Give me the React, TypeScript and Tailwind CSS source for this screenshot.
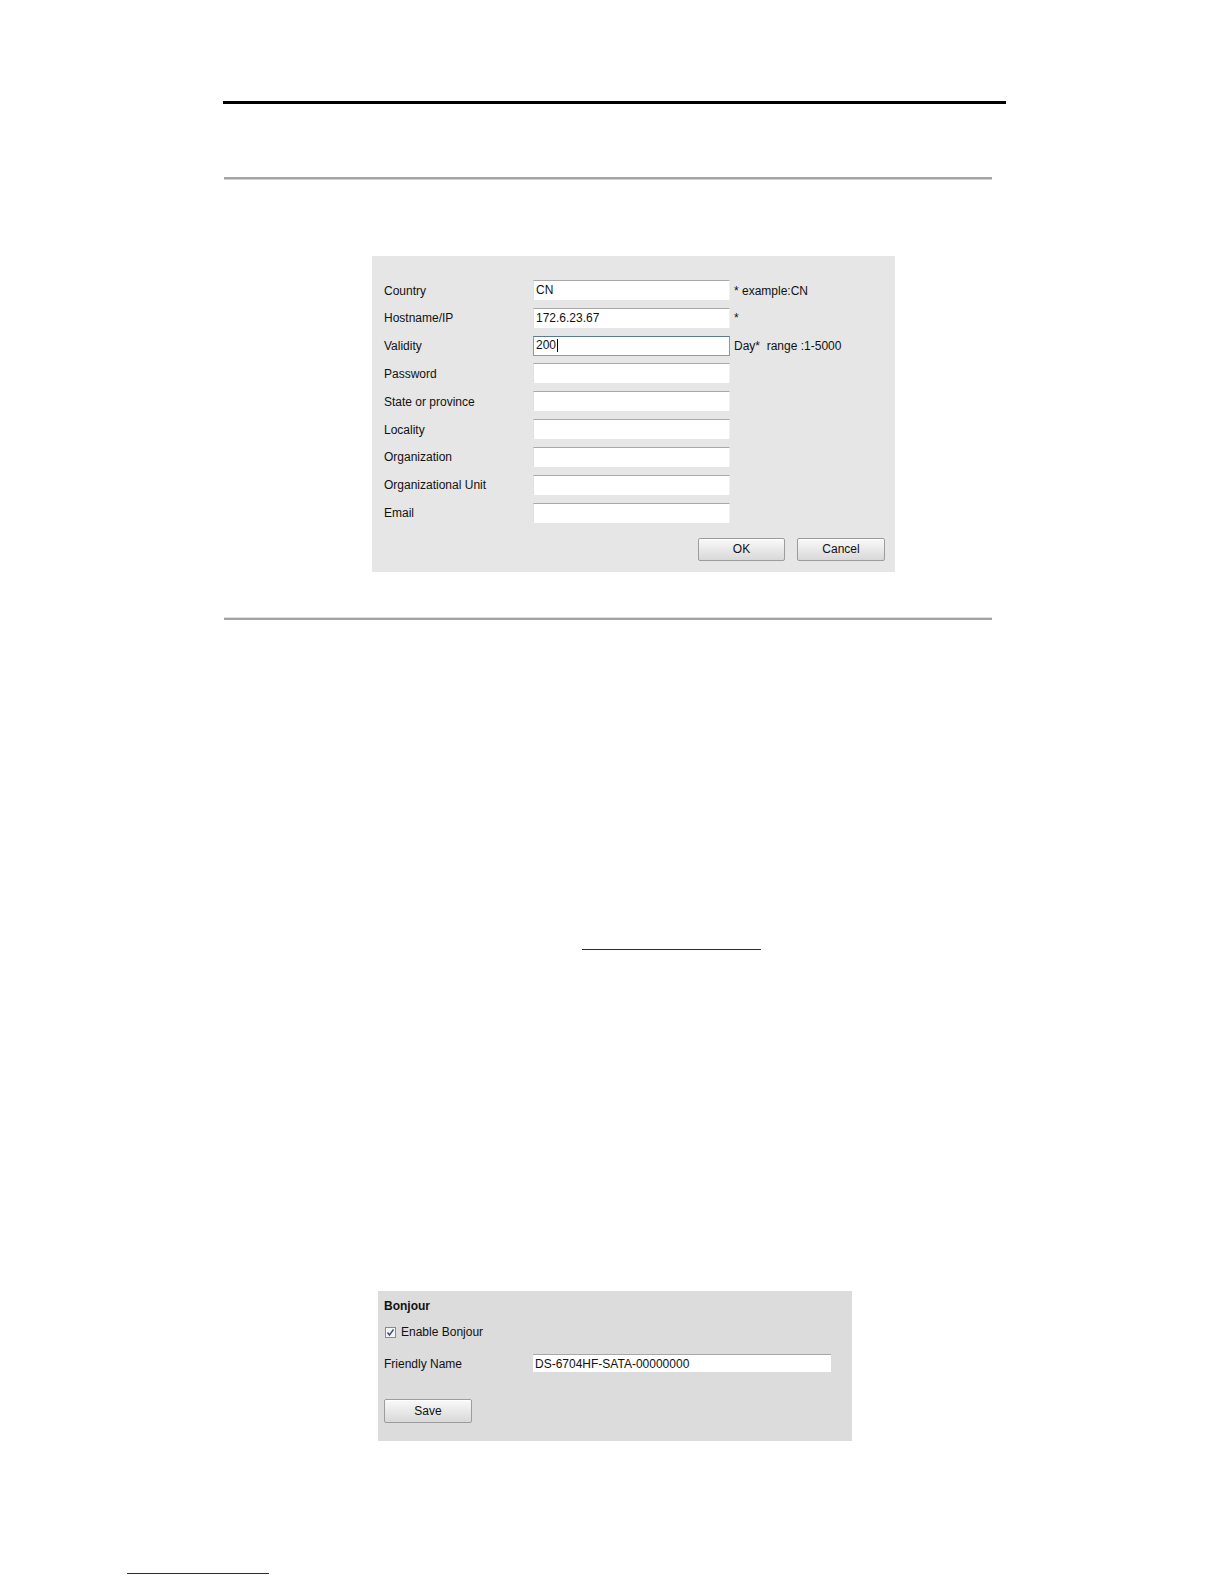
import React from "react";

const rows: { label: string; value: string; note?: string; focus?: boolean }[] = [
  { label: "Country", value: "CN", note: "* example:CN" },
  { label: "Hostname/IP", value: "172.6.23.67", note: "*" },
  { label: "Validity", value: "200", note: "Day*  range :1-5000", focus: true },
  { label: "Password", value: "" },
  { label: "State or province", value: "" },
  { label: "Locality", value: "" },
  { label: "Organization", value: "" },
  { label: "Organizational Unit", value: "" },
  { label: "Email", value: "" },
];

function Btn({ children, w }: { children: React.ReactNode; w: string }) {
  return (
    <div
      className={`${w} h-[23.5px] flex items-center justify-center rounded-[2px] border border-[#9c9c9c] bg-gradient-to-b from-[#fafafa] to-[#d8d8d8] text-[12px] text-[#111] shadow-[inset_0_1px_0_#ffffff]`}
    >
      {children}
    </div>
  );
}

export default function App() {
  return (
    <div
      className="w-full bg-white overflow-hidden text-[#111]"
      style={{ fontFamily: '"Liberation Sans", Arial, sans-serif' }}
    >
      <div className="pt-[101px] pb-[8px]">
        <div className="ml-[223px] w-[783px] h-[3px] bg-black" />
        <div className="ml-[224px] mt-[73px] w-[768px] h-[3px] bg-[#a3a3a3] border-b border-[#d0d0d0]" />

        <div className="ml-[372px] mt-[76px] w-[523px] h-[316px] bg-[#e6e6e6] pt-[24px] pl-[12px] pr-[10px]">
          <div className="flex flex-col gap-[7.84px]">
            {rows.map((r) => (
              <div key={r.label} className="flex items-center h-[20px]">
                <div className="w-[149px] text-[12px] leading-[14px] pt-[1px]">{r.label}</div>
                <div
                  className={`w-[197px] h-[20px] bg-white flex items-center pl-[2px] pb-[1px] text-[12px] ${
                    r.focus
                      ? "border border-[#7f9db9] border-t-[#5a7a9a]"
                      : "border-t border-t-[#a8a8a8] border-l border-l-[#e0e0e0] border-r border-r-[#f0f0f0]"
                  }`}
                >
                  {r.value}
                  {r.focus && <span className="inline-block w-[1px] h-[13px] bg-black ml-[1px]" />}
                </div>
                {r.note && (
                  <div className="ml-[4px] text-[12px] leading-[14px] pt-[1px] whitespace-pre">{r.note}</div>
                )}
              </div>
            ))}
          </div>
          <div className="mt-[15px] flex justify-end gap-[12px]">
            <Btn w="w-[87px]">OK</Btn>
            <Btn w="w-[88px]">Cancel</Btn>
          </div>
        </div>

        <div className="ml-[224px] mt-[45px] w-[768px] h-[3px] bg-[#a3a3a3] border-t border-[#dedede]" />

        <div className="ml-[582px] mt-[329px] w-[179px] h-[1px] bg-[#1c1ca8]" />

        <div className="ml-[378px] mt-[341px] w-[474px] h-[150px] bg-[#dcdcdc] pt-[8px] pl-[6px]">
          <div className="text-[12px] leading-[14px] font-bold">Bonjour</div>
          <div className="mt-[12px] h-[14px] flex items-center">
            <svg width="11" height="11" viewBox="0 0 11 11" className="mr-[5px] ml-[1px]">
              <rect x="0.5" y="0.5" width="10" height="10" fill="#f4f4f4" stroke="#8a8a8a" />
              <path d="M2.5 5.5 L4.5 8 L8.5 2.5" fill="none" stroke="#3a4a7a" strokeWidth="1.4" />
            </svg>
            <span className="text-[12px] leading-[14px]">Enable Bonjour</span>
          </div>
          <div className="mt-[15px] flex items-center h-[18px]">
            <div className="w-[149px] text-[12px] leading-[14px] pt-[2px]">Friendly Name</div>
            <div className="w-[298px] h-[18px] bg-white border-t border-t-[#a8a8a8] flex items-center pl-[2px] text-[12px]">
              DS-6704HF-SATA-00000000
            </div>
          </div>
          <div className="mt-[27px]">
            <Btn w="w-[88px]">Save</Btn>
          </div>
        </div>

        <div className="ml-[127px] mt-[132px] w-[142px] h-[1px] bg-[#1c1ca8]" />
      </div>
    </div>
  );
}
